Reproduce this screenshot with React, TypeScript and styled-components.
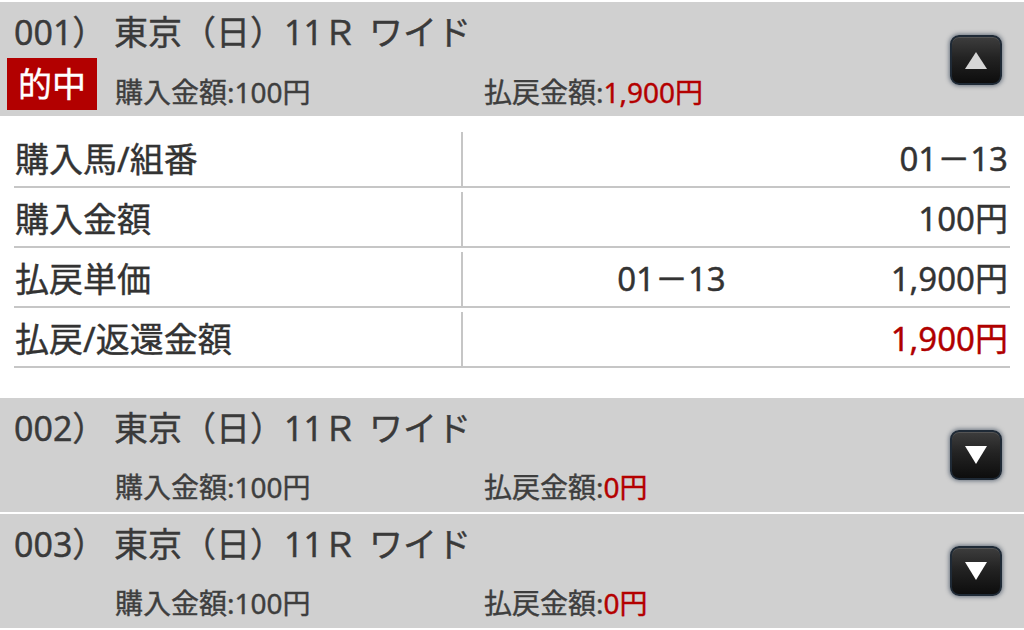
import React from "react";
import styled, { createGlobalStyle } from "styled-components";

const GlobalStyle = createGlobalStyle`
  html, body {
    margin: 0;
    padding: 0;
    background: #ffffff;
  }
  body {
    font-family: "Noto Sans", "Noto Sans CJK JP", sans-serif;
    color: #3a3a3a;
    overflow: hidden;
    -webkit-text-stroke: 0.4px currentColor;
  }
  * { box-sizing: border-box; }
`;

const Page = styled.div`
  width: 1024px;
  display: flex;
  flex-direction: column;
`;

const Header = styled.div`
  margin-top: 2px;
  height: 114px;
  background: #d0d0d0;
  display: grid;
  grid-template-columns: 1fr auto;
  align-items: center;
  padding-right: 22px;
`;

const Info = styled.div`
  display: flex;
  flex-direction: column;
  height: 100%;
`;

const TitleRow = styled.div`
  height: 56px;
  display: flex;
  align-items: center;
  padding-left: 14px;
  font-size: 34px;
  color: #3a3a3a;
  white-space: nowrap;
`;

const Num = styled.span`
  width: 100px;
`;

const BetType = styled.span`
  margin-left: 12px;
`;

const SummaryRow = styled.div`
  flex: 1;
  display: flex;
  align-items: flex-end;
  padding-bottom: 7px;
  font-size: 28px;
  line-height: 36px;
  color: #3e3e3e;
  white-space: nowrap;
`;

const BadgeSlot = styled.div`
  width: 115px;
  padding-left: 7px;
  display: flex;
`;

const Badge = styled.span`
  width: 90px;
  height: 52px;
  background: #b20000;
  color: #ffffff;
  font-size: 34px;
  display: flex;
  align-items: center;
  justify-content: center;
`;

const Purchase = styled.span`
  width: 369px;
`;

const Money = styled.span`
  color: #b40000;
`;

const Toggle = styled.button`
  width: 52px;
  height: 50px;
  padding: 0;
  border-radius: 9px;
  border: 2px solid #1f2a36;
  background: linear-gradient(#3d3d3d 0%, #232323 45%, #0d0d0d 100%);
  box-shadow: 0 0 4px 1px rgba(40, 55, 75, 0.6), inset 0 1px 0 rgba(255, 255, 255, 0.12);
  display: flex;
  align-items: center;
  justify-content: center;
`;

const Table = styled.div`
  margin: 0 14px 28px;
  padding-top: 12px;
  display: flex;
  flex-direction: column;
`;

const Row = styled.div`
  height: 60px;
  display: grid;
  grid-template-columns: 447px 419px 1fr;
  border-bottom: 2px solid #c6c6c6;
  font-size: 33px;
  color: #333333;
  white-space: nowrap;
`;

const Label = styled.div`
  display: flex;
  align-items: center;
  padding-left: 1px;
  font-size: 34px;
`;

const Mid = styled.div`
  margin-top: 4px;
  padding-bottom: 4px;
  border-left: 2px solid #c6c6c6;
  display: flex;
  align-items: center;
  justify-content: center;
`;

const Value = styled.div<{ $red?: boolean }>`
  display: flex;
  align-items: center;
  justify-content: flex-end;
  padding-right: 2px;
  color: ${(p) => (p.$red ? "#b00000" : "#333333")};
`;

const Arrow = ({ up }: { up: boolean }) => (
  <svg width="26" height="22" viewBox="0 0 26 22">
    {up ? (
      <polygon points="13,3 24,20 2,20" fill="#d6d6d6" />
    ) : (
      <polygon points="2,2 24,2 13,20" fill="#ffffff" />
    )}
  </svg>
);

type Item = { no: string; hit: boolean; refund: string; open: boolean };

const items: Item[] = [
  { no: "001）", hit: true, refund: "1,900円", open: true },
  { no: "002）", hit: false, refund: "0円", open: false },
  { no: "003）", hit: false, refund: "0円", open: false },
];

const ItemHeader = ({ item }: { item: Item }) => (
  <Header>
    <Info>
      <TitleRow>
        <Num>{item.no}</Num>
        <span>東京（日）11Ｒ</span>
        <BetType>ワイド</BetType>
      </TitleRow>
      <SummaryRow>
        <BadgeSlot>{item.hit && <Badge>的中</Badge>}</BadgeSlot>
        <Purchase>購入金額:100円</Purchase>
        <span>
          払戻金額:<Money>{item.refund}</Money>
        </span>
      </SummaryRow>
    </Info>
    <Toggle aria-label="toggle">
      <Arrow up={item.open} />
    </Toggle>
  </Header>
);

export default function App() {
  return (
    <Page>
      <GlobalStyle />
      <ItemHeader item={items[0]} />
      <Table>
        <Row>
          <Label>購入馬/組番</Label>
          <Mid />
          <Value>01－13</Value>
        </Row>
        <Row>
          <Label>購入金額</Label>
          <Mid />
          <Value>100円</Value>
        </Row>
        <Row>
          <Label>払戻単価</Label>
          <Mid>01－13</Mid>
          <Value>1,900円</Value>
        </Row>
        <Row>
          <Label>払戻/返還金額</Label>
          <Mid />
          <Value $red>1,900円</Value>
        </Row>
      </Table>
      <ItemHeader item={items[1]} />
      <ItemHeader item={items[2]} />
    </Page>
  );
}
